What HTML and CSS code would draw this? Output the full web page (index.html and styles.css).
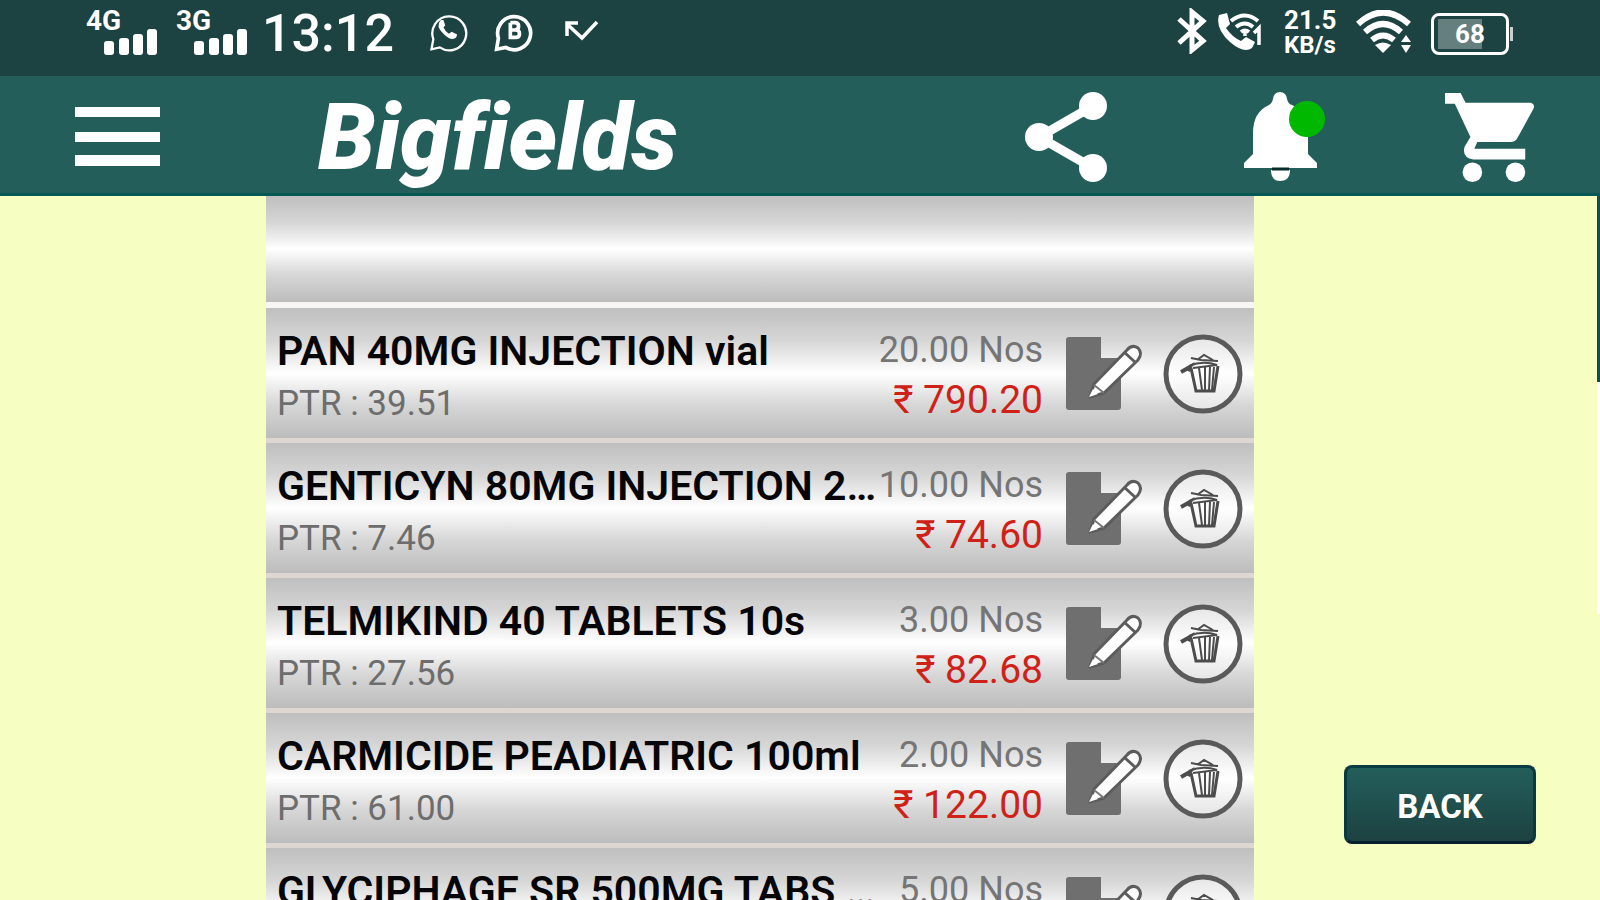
FILE: index.html
```html
<!DOCTYPE html>
<html lang="en">
<head>
<meta charset="utf-8">
<title>Bigfields</title>
<link rel="stylesheet" href="styles.css">
</head>
<body>
<svg class="defs" aria-hidden="true">
  <symbol id="signal" viewBox="0 0 56 28">
    <rect x="0" y="13" width="10" height="14" rx="3"/><rect x="15" y="10" width="10" height="17" rx="3"/><rect x="29" y="6" width="10" height="21" rx="3"/><rect x="43" y="1" width="10" height="26" rx="3"/>
  </symbol>
  <symbol id="edit" viewBox="0 0 80 80">
    <path d="M3 3H36V24H46L56 37V73Q56 76 53 76H4Q1 76 1 73V6Q1 3 4 3Z" fill="#6f6f6f"/>
    <path d="M36 24H55V44Z" fill="#6f6f6f"/>
    <path d="M25 63L29 50L62 16Q67 10 73 14Q78 19 73 26L39 59Z" fill="#fff" stroke="#5c5c5c" stroke-width="3" stroke-linejoin="round"/>
    <path d="M59 18L71 29" stroke="#5c5c5c" stroke-width="3"/>
    <path d="M29 51L39 59" stroke="#777" stroke-width="2"/>
    <path d="M24 63L28 55L33 60Z" fill="#fff"/>
  </symbol>
  <symbol id="trash" viewBox="0 0 80 80">
    <circle cx="40" cy="40" r="37" fill="#fff" fill-opacity=".45" stroke="#5a5a5a" stroke-width="5"/>
    <g fill="none" stroke="#4c4c4c" stroke-width="3">
      <path d="M28 34L33 57H51L55 32"/><path d="M36 34L39 56M42 33V56M47 33L46 56M51 33L49 56" stroke-width="2"/>
      <path d="M18 38L27 33L25 37" stroke-width="4"/><path d="M26 32Q40 26 54 31L30 34M28 24L38 26L55 27M34 26L41 21L50 26" stroke-width="2"/>
    </g>
  </symbol>
</svg>

<div class="status">
  <div class="status-group">
    <div class="cell"><span class="net">4G</span><svg class="bars"><use href="#signal"/></svg></div>
    <div class="cell"><span class="net">3G</span><svg class="bars"><use href="#signal"/></svg></div>
    <time class="clock">13:12</time>
    <svg class="chat" viewBox="0 0 44 48" fill="none" stroke="#fff" stroke-width="2.500"><path d="M4 45L6 34A18.500 18.500 0 1 1 13 43Z"/><path d="M14 13Q8 20 17 28Q26 37 31 32L32 29L26 26L23 28Q19 26 17 21L19 19L17 13Z" fill="#fff" stroke="none"/></svg>
    <svg class="chat" viewBox="0 0 44 48" fill="none" stroke="#fff"><path d="M3 45L5 33A18 18 0 1 1 13 43Z" stroke-width="4"/><path d="M18 16V32H24Q28 32 28 28Q28 24 24 24H18M18 16H23Q27 16 27 20Q27 24 23 24" stroke-width="4"/></svg>
    <svg class="missed" viewBox="0 0 36 22" fill="none" stroke="#fff" stroke-width="3.500"><path d="M3 16V3H14M3 4L18 18L33 2"/></svg>
  </div>
  <div class="status-group">
    <svg class="bt" viewBox="0 0 32 46" fill="none" stroke="#fff" stroke-width="5"><path d="M3 11L27 33L16 42V4L27 13L3 35"/></svg>
    <svg class="call" viewBox="0 0 48 42" fill="none" stroke="#fff"><path d="M3 4L11 2L14 13L10 17Q16 26 25 30L30 26L39 31L36 37Q28 43 14 31Q-1 18 3 4Z" fill="#fff" stroke="none"/><path d="M15 10Q29-1 42 10M20 16Q29 9 37 16M25 21Q29 18 33 21" stroke-width="4"/><path d="M29 20V25M38 22L43 17V34" stroke-width="3.500"/></svg>
    <div class="rate"><span class="speed">21.5</span><span>KB/s</span></div>
    <svg class="wifi" viewBox="0 0 56 44" fill="none" stroke="#fff" stroke-width="6"><path d="M2 14Q27-9 53 14M9 22Q27 6 45 22M16 30Q27 21 38 30"/><path d="M19 35Q27 30 35 35L27 43Z" fill="#fff" stroke="none"/><path d="M45 32L50 25L55 32ZM45 35L50 43L55 35Z" fill="#fff" stroke="none"/></svg>
    <div class="battery">68</div>
  </div>
</div>

<header class="bar">
  <button class="icon-btn menu" aria-label="Menu"><svg viewBox="0 0 85 62" fill="#fff"><path d="M0 1H85V11H0ZM0 26H85V36H0ZM0 49H85V60H0Z"/></svg></button>
  <h1 class="brand">Bigfields</h1>
  <button class="icon-btn share" aria-label="Share"><svg viewBox="0 0 82 90" fill="#fff"><path d="M68 14L14 45L68 76" fill="none" stroke="#fff" stroke-width="9"/><circle cx="68" cy="14" r="14"/><circle cx="14" cy="45" r="14"/><circle cx="68" cy="76" r="14"/></svg></button>
  <button class="icon-btn bell" aria-label="Notifications"><svg viewBox="0 0 82 90"><path d="M29 7A7 7 0 0 1 43 7Q44 12 48 13Q64 20 64 41V62L73 71V76H0V71L9 62V41Q9 20 25 13Q28 12 29 7Z" fill="#fff"/><path d="M27 78H46V80Q45 89 36 89Q28 89 27 80Z" fill="#fff"/><path d="M28 77H45" stroke="#062c2a" stroke-width="3"/><circle cx="63" cy="27" r="18" fill="#00b800"/></svg></button>
  <button class="icon-btn cart" aria-label="Cart"><svg viewBox="0 0 92 92" fill="#fff"><path d="M0 1H16L21 11H88Q93 13 90 18L74 47Q72 51 67 51H33L30 58H82V69H29Q17 67 20 56L26 46L10 12H0Z"/><circle cx="28" cy="82" r="10"/><circle cx="72" cy="82" r="10"/></svg></button>
</header>

<main class="content">
  <div class="list-pane">
    <div class="blank"></div>
    <ul class="items">
      <li class="item"><div class="info"><h2>PAN 40MG INJECTION vial</h2><p class="ptr">PTR : 39.51</p></div><div class="amount"><p class="qty">20.00 Nos</p><p class="price">₹ 790.20</p></div><button class="act" aria-label="Edit"><svg><use href="#edit"/></svg></button><button class="act" aria-label="Delete"><svg><use href="#trash"/></svg></button></li>
      <li class="item"><div class="info"><h2>GENTICYN 80MG INJECTION 2…</h2><p class="ptr">PTR : 7.46</p></div><div class="amount"><p class="qty">10.00 Nos</p><p class="price">₹ 74.60</p></div><button class="act" aria-label="Edit"><svg><use href="#edit"/></svg></button><button class="act" aria-label="Delete"><svg><use href="#trash"/></svg></button></li>
      <li class="item"><div class="info"><h2>TELMIKIND 40 TABLETS 10s</h2><p class="ptr">PTR : 27.56</p></div><div class="amount"><p class="qty">3.00 Nos</p><p class="price">₹ 82.68</p></div><button class="act" aria-label="Edit"><svg><use href="#edit"/></svg></button><button class="act" aria-label="Delete"><svg><use href="#trash"/></svg></button></li>
      <li class="item"><div class="info"><h2>CARMICIDE PEADIATRIC 100ml</h2><p class="ptr">PTR : 61.00</p></div><div class="amount"><p class="qty">2.00 Nos</p><p class="price">₹ 122.00</p></div><button class="act" aria-label="Edit"><svg><use href="#edit"/></svg></button><button class="act" aria-label="Delete"><svg><use href="#trash"/></svg></button></li>
      <li class="item"><div class="info"><h2>GLYCIPHAGE SR 500MG TABS …</h2></div><div class="amount"><p class="qty">5.00 Nos</p></div><button class="act" aria-label="Edit"><svg><use href="#edit"/></svg></button><button class="act" aria-label="Delete"><svg><use href="#trash"/></svg></button></li>
    </ul>
  </div>
  <div class="side"><button class="back">BACK</button></div>
  <div class="scroll"></div>
</main>
</body>
</html>
```
FILE: styles.css
```css
* { box-sizing: border-box; }
body {
  margin: 0;
  height: 100vh;
  display: flex;
  flex-direction: column;
  overflow: hidden;
  background: #f6fec2;
  font-family: Roboto, "Liberation Sans", sans-serif;
}
h1, h2, p, ul { margin: 0; padding: 0; }
button { border: 0; padding: 0; background: none; font: inherit; }
svg { display: block; }
.defs { position: absolute; width: 0; height: 0; }

.status {
  flex: none;
  height: 76px;
  padding: 8px 88px 0 86px;
  display: flex;
  justify-content: space-between;
  background: #1c4241;
  color: #fff;
}
.status-group { display: flex; align-items: flex-start; }
.cell { position: relative; width: 90px; height: 48px; }
.net { display: block; font-size: 28px; line-height: 26px; font-weight: 700; }
.bars { position: absolute; left: 18px; top: 20px; width: 56px; height: 28px; fill: #fff; }
.clock { width: 164px; margin-left: -4px; font-size: 52px; line-height: 52px; font-weight: 500; }
.chat { width: 44px; height: 44px; margin-right: 22px; }
.missed { width: 36px; height: 22px; margin: 12px 0 0 6px; }
.bt { width: 32px; height: 46px; margin-right: 8px; }
.call { width: 48px; height: 42px; margin: 3px 20px 0 0; }
.rate { width: 58px; margin-right: 14px; display: flex; flex-direction: column; font-size: 24px; line-height: 25px; font-weight: 700; }
.speed { font-size: 26px; }
.wifi { width: 56px; height: 44px; margin: 2px 19px 0 0; }
.battery {
  position: relative;
  width: 78px;
  height: 42px;
  margin: 5px 3px 0 0;
  border: 3px solid #fff;
  border-radius: 8px;
  background: linear-gradient(90deg, #647f7d 68%, transparent 68%) 4px 3px / 64px 30px no-repeat;
  font-size: 26px;
  line-height: 37px;
  font-weight: 700;
  text-align: center;
}
.battery::after { content: ""; position: absolute; right: -7px; top: 11px; width: 3px; height: 14px; background: #c5d0cf; }

.bar {
  flex: none;
  height: 120px;
  padding: 4px 65px 0 75px;
  display: flex;
  align-items: center;
  background: #235e5b;
  border-bottom: 3px solid #075754;
}
.icon-btn svg { width: 100%; height: 100%; }
.menu { width: 85px; height: 62px; }
.brand { flex: 1; margin-left: 158px; padding-top: 2px; color: #fff; font-size: 92px; line-height: 108px; font-weight: 900; font-style: italic; font-variant-ligatures: none; }
.share { width: 82px; height: 90px; margin-right: 137px; }
.bell { width: 82px; height: 90px; margin-right: 119px; }
.cart { width: 90px; height: 92px; }

.content { flex: 1; min-height: 0; position: relative; display: grid; grid-template-columns: 266fr 988fr 346fr; }
.list-pane { grid-column: 2; min-height: 0; overflow: hidden; }
.blank, .item { background: linear-gradient(#bfbfbf, #d6d6d6 25%, #fff 50%, #d6d6d6 75%, #bcbcbc); }
.blank { height: 112px; border-bottom: 6px solid #f8f5f3; }
.items { list-style: none; }
.item {
  height: 135px;
  border-bottom: 5px solid #ddd6d1;
  padding: 0 11px;
  display: flex;
}
.info { flex: 1; min-width: 0; padding-top: 19px; }
.info h2 { font-size: 41px; line-height: 48px; font-weight: 600; color: #060608; white-space: nowrap; }
.ptr { font-size: 35px; line-height: 58px; color: #6d6d6d; white-space: nowrap; }
.amount { padding-top: 19px; margin-right: 22px; text-align: right; white-space: nowrap; }
.qty { font-size: 36px; line-height: 46px; color: #757575; }
.price { font-size: 39px; line-height: 54px; color: #cf2118; }
.act { width: 80px; height: 80px; margin-top: 26px; }
.act + .act { margin-left: 18px; }
.act svg { width: 80px; height: 80px; }

.side { grid-column: 3; display: flex; align-items: flex-end; justify-content: flex-end; padding: 0 64px 56px 0; }
.back {
  width: 192px;
  height: 79px;
  padding-top: 4px;
  border: 3px solid #073b41;
  border-bottom-color: #081f30;
  border-radius: 8px;
  background: linear-gradient(#235e5b, #1c4241);
  color: #fff;
  font-size: 33px;
  font-weight: 700;
}
.scroll { position: absolute; right: 0; top: 0; width: 3px; height: 418px; background: linear-gradient(#104f4e 186px, #fff 186px); }
```
